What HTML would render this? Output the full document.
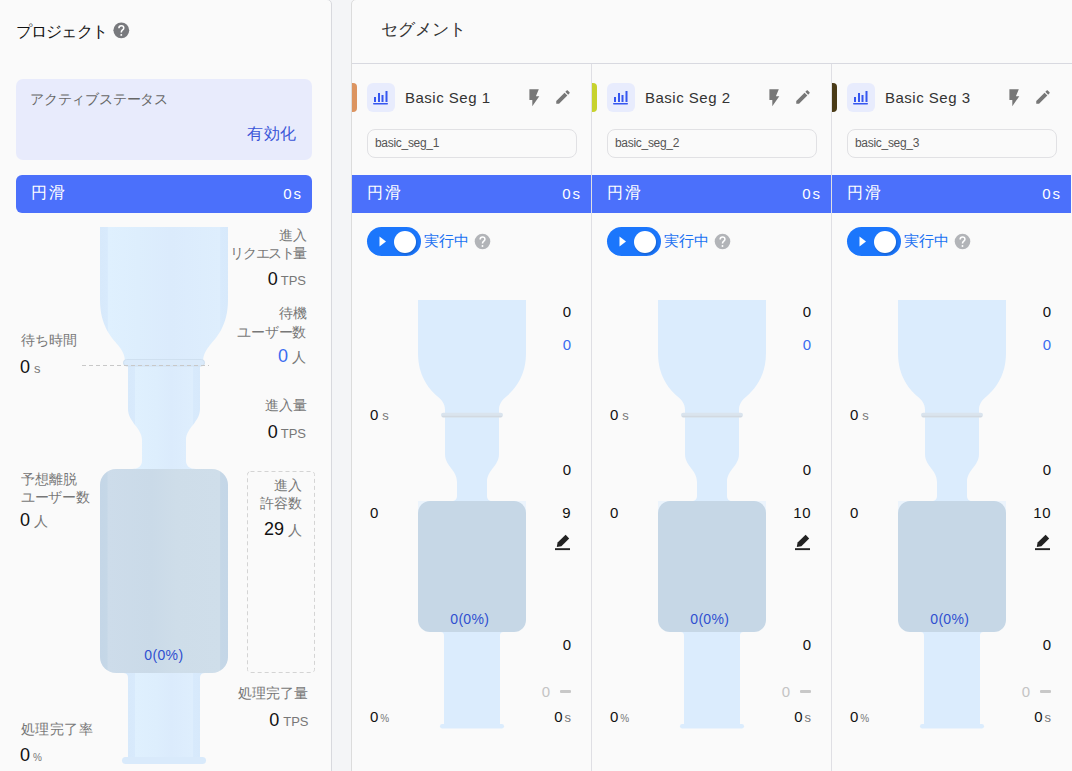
<!DOCTYPE html><html><head><meta charset="utf-8"><style>
*{margin:0;padding:0;box-sizing:border-box}
html,body{width:1072px;height:771px;overflow:hidden;background:#f4f5f7;font-family:"Liberation Sans", sans-serif}
.t{position:absolute;white-space:nowrap;line-height:20px;font-weight:300}
.a{position:absolute;display:block}
.r{position:absolute}
</style></head><body>
<div class="r" style="left:-10px;top:-1px;width:342px;height:800px;background:#fafafa;border:1px solid #d8d9de;border-radius:5px"></div>
<div class="t" style="left:15.5px;top:22px;font-size:16px;color:#111;letter-spacing:-0.75px">プロジェクト</div>
<svg class="a" style="left:112px;top:21px" width="18.8" height="18.8" viewBox="0 0 18.8 18.8"><g transform="translate(1.400,1.450) scale(0.6583)"><circle cx="12" cy="12" r="12" fill="#78797d"/><g transform="translate(12 12.6) scale(1.17) translate(-12 -12.6)"><path d="M8.9,9.4 C8.9,7.4 10.3,6.1 12.1,6.1 C13.9,6.1 15.2,7.3 15.2,9 C15.2,10.4 14.3,11.1 13.3,11.9 C12.4,12.6 12,13.3 12,14.8" fill="none" stroke="#fff" stroke-width="2"/><circle cx="12" cy="18" r="1.25" fill="#fff"/></g></g></svg>
<div class="r" style="left:16px;top:79px;width:296px;height:81px;background:#e8ebfc;border-radius:7px"></div>
<div class="t" style="left:30px;top:89px;font-size:14px;color:#666;letter-spacing:-0.2px">アクティブステータス</div>
<div class="t" style="right:775px;top:124px;font-size:16px;color:#3a55d8;letter-spacing:0.7px">有効化</div>
<div class="r" style="left:16px;top:175px;width:296px;height:38px;background:#4b70fb;border-radius:6px"></div>
<div class="t" style="left:31px;top:183px;font-size:16px;color:#fff;letter-spacing:2px">円滑</div>
<div class="t" style="right:769px;top:184px;font-size:15px;color:#fff;letter-spacing:2px">0s</div>
<svg class="a" style="left:0;top:0" width="340" height="771" viewBox="0 0 340 771">
<defs>
<linearGradient id="lg1" gradientUnits="userSpaceOnUse" x1="100" x2="228" y1="0" y2="0">
<stop offset="0" stop-color="#d7e9fb"/><stop offset="0.058" stop-color="#d8eafc"/><stop offset="0.062" stop-color="#dff0fe"/><stop offset="0.3" stop-color="#ddeefd"/><stop offset="0.55" stop-color="#dbebfc"/><stop offset="0.938" stop-color="#deeefd"/><stop offset="0.942" stop-color="#d8eafc"/><stop offset="1" stop-color="#d7e9fb"/>
</linearGradient>
<linearGradient id="lg3" gradientUnits="userSpaceOnUse" x1="128" x2="200" y1="0" y2="0">
<stop offset="0" stop-color="#d7e9fb"/><stop offset="0.1" stop-color="#d8eafc"/><stop offset="0.104" stop-color="#dff0fe"/><stop offset="0.4" stop-color="#ddeefd"/><stop offset="0.6" stop-color="#dbebfc"/><stop offset="0.896" stop-color="#deeefd"/><stop offset="0.9" stop-color="#d8eafc"/><stop offset="1" stop-color="#d7e9fb"/>
</linearGradient>
<linearGradient id="lg2" gradientUnits="userSpaceOnUse" x1="100" x2="228" y1="0" y2="0">
<stop offset="0" stop-color="#c4d6e7"/><stop offset="0.056" stop-color="#c5d7e7"/><stop offset="0.062" stop-color="#cddcea"/><stop offset="0.4" stop-color="#cadae8"/><stop offset="0.6" stop-color="#cedde9"/><stop offset="0.936" stop-color="#cfdeea"/><stop offset="0.942" stop-color="#c5d7e7"/><stop offset="1" stop-color="#c4d6e7"/>
</linearGradient>
</defs>
<path d="M100,227 H228 V300 C228,326 216,338 210,345 C206,350 203,355 203,362 H125 C125,355 122,350 118,345 C112,338 100,326 100,300 Z" fill="url(#lg1)"/>
<path d="M128,364 H200 V409 C200,422 186,428 186,440 V461 C186,466 190,469 196,469 H132 C138,469 142,466 142,461 V440 C142,428 128,422 128,409 Z" fill="url(#lg3)"/>
<rect x="123.5" y="359.5" width="81" height="6.5" rx="3.2" fill="#daeafa" stroke="#cfe0f0" stroke-width="1"/>
<rect x="100" y="469" width="128" height="204" rx="16" fill="url(#lg2)"/>
<path d="M122,673 C126,673 128,674 128,678 V757 H200 V678 C200,674 202,673 206,673 Z" fill="url(#lg3)"/>
<rect x="122" y="757" width="84" height="7" rx="3.5" fill="#d9eafb"/>
<line x1="82" y1="365.5" x2="209" y2="365.5" stroke="#c8c8c8" stroke-width="1" stroke-dasharray="4 3"/>
<rect x="247.5" y="471.5" width="67" height="201" rx="3" fill="none" stroke="#d4d4d4" stroke-width="1" stroke-dasharray="4 3"/>
</svg>
<div class="t" style="right:765px;top:225px;font-size:14px;color:#777;">進入</div>
<div class="t" style="right:766px;top:243px;font-size:14px;color:#777;letter-spacing:-1.4px">リクエスト量</div>
<div class="t" style="right:766px;top:269px;font-size:18px;color:#111">0<span style="font-size:13px;color:#777;margin-left:3px">TPS</span></div>
<div class="t" style="right:765px;top:303px;font-size:14px;color:#777;">待機</div>
<div class="t" style="right:766px;top:322px;font-size:14px;color:#777;letter-spacing:-0.3px">ユーザー数</div>
<div class="t" style="right:766px;top:346px;font-size:18px;color:#3a6cf0">0<span style="font-size:14px;color:#777;margin-left:4px">人</span></div>
<div class="t" style="right:765.5px;top:395px;font-size:14px;color:#777;">進入量</div>
<div class="t" style="right:766px;top:422px;font-size:18px;color:#111">0<span style="font-size:13px;color:#777;margin-left:3px">TPS</span></div>
<div class="t" style="right:770px;top:475px;font-size:14px;color:#777;">進入</div>
<div class="t" style="right:770px;top:493px;font-size:14px;color:#777;">許容数</div>
<div class="t" style="right:770px;top:519px;font-size:18px;color:#111;letter-spacing:0px">29<span style="font-size:14px;color:#777;margin-left:4px;letter-spacing:0">人</span></div>
<div class="t" style="right:764px;top:683px;font-size:14px;color:#777;">処理完了量</div>
<div class="t" style="right:763.5px;top:710px;font-size:18px;color:#111">0<span style="font-size:13px;color:#777;margin-left:4px">TPS</span></div>
<div class="t" style="left:21px;top:330px;font-size:14px;color:#777;">待ち時間</div>
<div class="t" style="left:20px;top:357px;font-size:18px;color:#111">0<span style="font-size:13px;color:#777;margin-left:4px">s</span></div>
<div class="t" style="left:21px;top:469px;font-size:14px;color:#777;">予想離脱</div>
<div class="t" style="left:21px;top:487px;font-size:14px;color:#777;letter-spacing:-0.3px">ユーザー数</div>
<div class="t" style="left:20px;top:510px;font-size:18px;color:#111">0<span style="font-size:14px;color:#777;margin-left:4px">人</span></div>
<div class="t" style="left:21px;top:719px;font-size:14px;color:#777;letter-spacing:0.4px">処理完了率</div>
<div class="t" style="left:20px;top:745px;font-size:18px;color:#111">0<span style="font-size:10px;color:#777;margin-left:3px">%</span></div>
<div class="t" style="left:144.3px;top:645px;font-size:14px;color:#2e4fd0;letter-spacing:0.35px">0(0%)</div>
<div class="r" style="left:351px;top:-1px;width:800px;height:800px;background:#fafafa;border:1px solid #dcdcdc;border-radius:5px"></div>
<div class="t" style="left:381px;top:20px;font-size:17px;color:#333;">セグメント</div>
<div class="r" style="left:352px;top:63px;width:720px;height:1px;background:#d8d9e0"></div>
<div class="r" style="left:352px;top:83px;width:5px;height:29px;background:#dc9460;border-radius:0 4px 4px 0"></div>
<div class="r" style="left:367px;top:83px;width:28px;height:29px;background:#e8ecfd;border-radius:6px"></div>
<svg class="a" style="left:367px;top:83px" width="28" height="29" viewBox="0 0 28 29"><g fill="#3556f0"><rect x="7" y="14" width="2" height="5"/><rect x="11" y="10" width="2" height="9"/><rect x="14.5" y="12" width="2" height="7"/><rect x="18.5" y="8" width="2" height="11"/><rect x="6" y="20" width="15" height="1.5" rx=".7"/></g></svg>
<div class="t" style="left:405px;top:88px;font-size:15px;color:#333;letter-spacing:0.5px">Basic Seg 1</div>
<svg class="a" style="left:0px;top:0" width="600" height="120" viewBox="0 0 600 120"><path d="M529.4,89.2 H538.8 L535.9,96.2 H539.3 L532.3,106.2 V100 H529.4 Z" fill="#777"/></svg>
<svg class="a" style="left:553.6px;top:88.2px" width="18" height="18" viewBox="0 0 24 24"><path d="M3 17.25V21h3.75L17.81 9.94l-3.75-3.75L3 17.25zM20.71 7.04c.39-.39.39-1.02 0-1.41l-2.34-2.34c-.39-.39-1.02-.39-1.41 0l-1.83 1.83 3.75 3.75 1.83-1.83z" fill="#777"/></svg>
<div class="r" style="left:367px;top:129px;width:210px;height:29px;border:1px solid #e1e1e4;border-radius:8px;background:#fafafa"></div>
<div class="t" style="left:375px;top:133px;font-size:12px;color:#555;letter-spacing:-0.3px">basic_seg_1</div>
<div class="r" style="left:352px;top:175px;width:239px;height:38px;background:#4b70fb"></div>
<div class="t" style="left:367px;top:183px;font-size:16px;color:#fff;letter-spacing:2px">円滑</div>
<div class="t" style="right:490px;top:184px;font-size:15px;color:#fff;letter-spacing:2px">0s</div>
<div class="r" style="left:367px;top:227px;width:54px;height:29px;background:#1b76fc;border-radius:15px"></div>
<svg class="a" style="left:379px;top:236px" width="8" height="11" viewBox="0 0 8 11"><path d="M0.5,0.5 L7,5.5 L0.5,10.5Z" fill="#fff"/></svg>
<div class="r" style="left:394px;top:230.5px;width:22px;height:22px;background:#fff;border-radius:50%;box-shadow:1px 1.5px 2px rgba(0,0,0,.18)"></div>
<div class="t" style="left:424px;top:231px;font-size:15px;color:#1c72f2;">実行中</div>
<svg class="a" style="left:473px;top:232px" width="18.6" height="18.6" viewBox="0 0 18.6 18.6"><g transform="translate(1.700,1.700) scale(0.6500)"><circle cx="12" cy="12" r="12" fill="#b2b4b8"/><g transform="translate(12 12.6) scale(1.17) translate(-12 -12.6)"><path d="M8.9,9.4 C8.9,7.4 10.3,6.1 12.1,6.1 C13.9,6.1 15.2,7.3 15.2,9 C15.2,10.4 14.3,11.1 13.3,11.9 C12.4,12.6 12,13.3 12,14.8" fill="none" stroke="#fff" stroke-width="2"/><circle cx="12" cy="18" r="1.25" fill="#fff"/></g></g></svg>
<svg class="a" style="left:0px;top:0" width="600" height="771" viewBox="0 0 600 771">
<path d="M418,300 H526 V353 C526,375 516,388 507,396 C502,400 499,404 499,410 V415 H445 V410 C445,404 442,400 437,396 C428,388 418,375 418,353 Z" fill="#dbecfd"/>
<path d="M445,415 H499 V454 C499,466 487,470 487,482 V496 C487,499 489,501 492,501 H452 C455,501 457,499 457,496 V482 C457,470 445,466 445,454 Z" fill="#dbecfd"/>
<rect x="441" y="412.8" width="62" height="4.6" rx="2.3" fill="#dae4ee"/><rect x="442" y="415.8" width="60" height="1.4" rx=".7" fill="#d2d9e1"/>
<rect x="418" y="501" width="108" height="14" fill="#ecf4fc"/>
<rect x="418" y="501" width="108" height="131" rx="12" fill="#c6d7e6"/>
<path d="M440,632 C443,632 444,633 444,636 V724 H500 V636 C500,633 501,632 504,632 Z" fill="#dbecfd"/>
<rect x="440" y="724" width="64" height="4.5" rx="2.2" fill="#dbecfd"/>
</svg>
<div class="t" style="left:450.3px;top:609px;font-size:14px;color:#2e4fd0;letter-spacing:0.3px">0(0%)</div>
<div class="t" style="right:501px;top:302px;font-size:15px;color:#111;">0</div>
<div class="t" style="right:501px;top:335px;font-size:15px;color:#3a6cf0;">0</div>
<div class="t" style="right:501px;top:460px;font-size:15px;color:#111;">0</div>
<div class="t" style="right:501px;top:503px;font-size:15px;color:#111;letter-spacing:0.5px">9</div>
<svg class="a" style="left:0px;top:0" width="600" height="560" viewBox="0 0 600 560"><path d="M556.8,547 L557.6,542.4 L565.6,534.8 L569.2,538.4 L561.4,546.2 Z" fill="#222"/><rect x="555" y="548.2" width="15" height="1.9" fill="#222"/></svg>
<div class="t" style="right:501px;top:635px;font-size:15px;color:#111;">0</div>
<div class="t" style="right:522px;top:682px;font-size:15px;color:#c4c4c4;">0</div>
<div class="r" style="left:559.5px;top:690px;width:11.5px;height:2.6px;background:#c8c8c8;border-radius:1px"></div>
<div class="t" style="right:501px;top:707px;font-size:15px;color:#111">0<span style="font-size:13px;color:#777;margin-left:2px">s</span></div>
<div class="t" style="left:370px;top:405px;font-size:15px;color:#111">0<span style="font-size:13px;color:#777;margin-left:4px">s</span></div>
<div class="t" style="left:370px;top:503px;font-size:15px;color:#111;">0</div>
<div class="t" style="left:370px;top:707px;font-size:15px;color:#111">0<span style="font-size:10px;color:#777;margin-left:2px">%</span></div>
<div class="r" style="left:592px;top:83px;width:5px;height:29px;background:#c7d22e;border-radius:0 4px 4px 0"></div>
<div class="r" style="left:607px;top:83px;width:28px;height:29px;background:#e8ecfd;border-radius:6px"></div>
<svg class="a" style="left:607px;top:83px" width="28" height="29" viewBox="0 0 28 29"><g fill="#3556f0"><rect x="7" y="14" width="2" height="5"/><rect x="11" y="10" width="2" height="9"/><rect x="14.5" y="12" width="2" height="7"/><rect x="18.5" y="8" width="2" height="11"/><rect x="6" y="20" width="15" height="1.5" rx=".7"/></g></svg>
<div class="t" style="left:645px;top:88px;font-size:15px;color:#333;letter-spacing:0.5px">Basic Seg 2</div>
<svg class="a" style="left:240px;top:0" width="600" height="120" viewBox="0 0 600 120"><path d="M529.4,89.2 H538.8 L535.9,96.2 H539.3 L532.3,106.2 V100 H529.4 Z" fill="#777"/></svg>
<svg class="a" style="left:793.6px;top:88.2px" width="18" height="18" viewBox="0 0 24 24"><path d="M3 17.25V21h3.75L17.81 9.94l-3.75-3.75L3 17.25zM20.71 7.04c.39-.39.39-1.02 0-1.41l-2.34-2.34c-.39-.39-1.02-.39-1.41 0l-1.83 1.83 3.75 3.75 1.83-1.83z" fill="#777"/></svg>
<div class="r" style="left:607px;top:129px;width:210px;height:29px;border:1px solid #e1e1e4;border-radius:8px;background:#fafafa"></div>
<div class="t" style="left:615px;top:133px;font-size:12px;color:#555;letter-spacing:-0.3px">basic_seg_2</div>
<div class="r" style="left:592px;top:175px;width:239px;height:38px;background:#4b70fb"></div>
<div class="t" style="left:607px;top:183px;font-size:16px;color:#fff;letter-spacing:2px">円滑</div>
<div class="t" style="right:250px;top:184px;font-size:15px;color:#fff;letter-spacing:2px">0s</div>
<div class="r" style="left:607px;top:227px;width:54px;height:29px;background:#1b76fc;border-radius:15px"></div>
<svg class="a" style="left:619px;top:236px" width="8" height="11" viewBox="0 0 8 11"><path d="M0.5,0.5 L7,5.5 L0.5,10.5Z" fill="#fff"/></svg>
<div class="r" style="left:634px;top:230.5px;width:22px;height:22px;background:#fff;border-radius:50%;box-shadow:1px 1.5px 2px rgba(0,0,0,.18)"></div>
<div class="t" style="left:664px;top:231px;font-size:15px;color:#1c72f2;">実行中</div>
<svg class="a" style="left:713px;top:232px" width="18.6" height="18.6" viewBox="0 0 18.6 18.6"><g transform="translate(1.700,1.700) scale(0.6500)"><circle cx="12" cy="12" r="12" fill="#b2b4b8"/><g transform="translate(12 12.6) scale(1.17) translate(-12 -12.6)"><path d="M8.9,9.4 C8.9,7.4 10.3,6.1 12.1,6.1 C13.9,6.1 15.2,7.3 15.2,9 C15.2,10.4 14.3,11.1 13.3,11.9 C12.4,12.6 12,13.3 12,14.8" fill="none" stroke="#fff" stroke-width="2"/><circle cx="12" cy="18" r="1.25" fill="#fff"/></g></g></svg>
<svg class="a" style="left:240px;top:0" width="600" height="771" viewBox="0 0 600 771">
<path d="M418,300 H526 V353 C526,375 516,388 507,396 C502,400 499,404 499,410 V415 H445 V410 C445,404 442,400 437,396 C428,388 418,375 418,353 Z" fill="#dbecfd"/>
<path d="M445,415 H499 V454 C499,466 487,470 487,482 V496 C487,499 489,501 492,501 H452 C455,501 457,499 457,496 V482 C457,470 445,466 445,454 Z" fill="#dbecfd"/>
<rect x="441" y="412.8" width="62" height="4.6" rx="2.3" fill="#dae4ee"/><rect x="442" y="415.8" width="60" height="1.4" rx=".7" fill="#d2d9e1"/>
<rect x="418" y="501" width="108" height="14" fill="#ecf4fc"/>
<rect x="418" y="501" width="108" height="131" rx="12" fill="#c6d7e6"/>
<path d="M440,632 C443,632 444,633 444,636 V724 H500 V636 C500,633 501,632 504,632 Z" fill="#dbecfd"/>
<rect x="440" y="724" width="64" height="4.5" rx="2.2" fill="#dbecfd"/>
</svg>
<div class="t" style="left:690.3px;top:609px;font-size:14px;color:#2e4fd0;letter-spacing:0.3px">0(0%)</div>
<div class="t" style="right:261px;top:302px;font-size:15px;color:#111;">0</div>
<div class="t" style="right:261px;top:335px;font-size:15px;color:#3a6cf0;">0</div>
<div class="t" style="right:261px;top:460px;font-size:15px;color:#111;">0</div>
<div class="t" style="right:261px;top:503px;font-size:15px;color:#111;letter-spacing:0.5px">10</div>
<svg class="a" style="left:240px;top:0" width="600" height="560" viewBox="0 0 600 560"><path d="M556.8,547 L557.6,542.4 L565.6,534.8 L569.2,538.4 L561.4,546.2 Z" fill="#222"/><rect x="555" y="548.2" width="15" height="1.9" fill="#222"/></svg>
<div class="t" style="right:261px;top:635px;font-size:15px;color:#111;">0</div>
<div class="t" style="right:282px;top:682px;font-size:15px;color:#c4c4c4;">0</div>
<div class="r" style="left:799.5px;top:690px;width:11.5px;height:2.6px;background:#c8c8c8;border-radius:1px"></div>
<div class="t" style="right:261px;top:707px;font-size:15px;color:#111">0<span style="font-size:13px;color:#777;margin-left:2px">s</span></div>
<div class="t" style="left:610px;top:405px;font-size:15px;color:#111">0<span style="font-size:13px;color:#777;margin-left:4px">s</span></div>
<div class="t" style="left:610px;top:503px;font-size:15px;color:#111;">0</div>
<div class="t" style="left:610px;top:707px;font-size:15px;color:#111">0<span style="font-size:10px;color:#777;margin-left:2px">%</span></div>
<div class="r" style="left:832px;top:83px;width:5px;height:29px;background:#4a3b17;border-radius:0 4px 4px 0"></div>
<div class="r" style="left:847px;top:83px;width:28px;height:29px;background:#e8ecfd;border-radius:6px"></div>
<svg class="a" style="left:847px;top:83px" width="28" height="29" viewBox="0 0 28 29"><g fill="#3556f0"><rect x="7" y="14" width="2" height="5"/><rect x="11" y="10" width="2" height="9"/><rect x="14.5" y="12" width="2" height="7"/><rect x="18.5" y="8" width="2" height="11"/><rect x="6" y="20" width="15" height="1.5" rx=".7"/></g></svg>
<div class="t" style="left:885px;top:88px;font-size:15px;color:#333;letter-spacing:0.5px">Basic Seg 3</div>
<svg class="a" style="left:480px;top:0" width="600" height="120" viewBox="0 0 600 120"><path d="M529.4,89.2 H538.8 L535.9,96.2 H539.3 L532.3,106.2 V100 H529.4 Z" fill="#777"/></svg>
<svg class="a" style="left:1033.6px;top:88.2px" width="18" height="18" viewBox="0 0 24 24"><path d="M3 17.25V21h3.75L17.81 9.94l-3.75-3.75L3 17.25zM20.71 7.04c.39-.39.39-1.02 0-1.41l-2.34-2.34c-.39-.39-1.02-.39-1.41 0l-1.83 1.83 3.75 3.75 1.83-1.83z" fill="#777"/></svg>
<div class="r" style="left:847px;top:129px;width:210px;height:29px;border:1px solid #e1e1e4;border-radius:8px;background:#fafafa"></div>
<div class="t" style="left:855px;top:133px;font-size:12px;color:#555;letter-spacing:-0.3px">basic_seg_3</div>
<div class="r" style="left:832px;top:175px;width:239px;height:38px;background:#4b70fb"></div>
<div class="t" style="left:847px;top:183px;font-size:16px;color:#fff;letter-spacing:2px">円滑</div>
<div class="t" style="right:10px;top:184px;font-size:15px;color:#fff;letter-spacing:2px">0s</div>
<div class="r" style="left:847px;top:227px;width:54px;height:29px;background:#1b76fc;border-radius:15px"></div>
<svg class="a" style="left:859px;top:236px" width="8" height="11" viewBox="0 0 8 11"><path d="M0.5,0.5 L7,5.5 L0.5,10.5Z" fill="#fff"/></svg>
<div class="r" style="left:874px;top:230.5px;width:22px;height:22px;background:#fff;border-radius:50%;box-shadow:1px 1.5px 2px rgba(0,0,0,.18)"></div>
<div class="t" style="left:904px;top:231px;font-size:15px;color:#1c72f2;">実行中</div>
<svg class="a" style="left:953px;top:232px" width="18.6" height="18.6" viewBox="0 0 18.6 18.6"><g transform="translate(1.700,1.700) scale(0.6500)"><circle cx="12" cy="12" r="12" fill="#b2b4b8"/><g transform="translate(12 12.6) scale(1.17) translate(-12 -12.6)"><path d="M8.9,9.4 C8.9,7.4 10.3,6.1 12.1,6.1 C13.9,6.1 15.2,7.3 15.2,9 C15.2,10.4 14.3,11.1 13.3,11.9 C12.4,12.6 12,13.3 12,14.8" fill="none" stroke="#fff" stroke-width="2"/><circle cx="12" cy="18" r="1.25" fill="#fff"/></g></g></svg>
<svg class="a" style="left:480px;top:0" width="600" height="771" viewBox="0 0 600 771">
<path d="M418,300 H526 V353 C526,375 516,388 507,396 C502,400 499,404 499,410 V415 H445 V410 C445,404 442,400 437,396 C428,388 418,375 418,353 Z" fill="#dbecfd"/>
<path d="M445,415 H499 V454 C499,466 487,470 487,482 V496 C487,499 489,501 492,501 H452 C455,501 457,499 457,496 V482 C457,470 445,466 445,454 Z" fill="#dbecfd"/>
<rect x="441" y="412.8" width="62" height="4.6" rx="2.3" fill="#dae4ee"/><rect x="442" y="415.8" width="60" height="1.4" rx=".7" fill="#d2d9e1"/>
<rect x="418" y="501" width="108" height="14" fill="#ecf4fc"/>
<rect x="418" y="501" width="108" height="131" rx="12" fill="#c6d7e6"/>
<path d="M440,632 C443,632 444,633 444,636 V724 H500 V636 C500,633 501,632 504,632 Z" fill="#dbecfd"/>
<rect x="440" y="724" width="64" height="4.5" rx="2.2" fill="#dbecfd"/>
</svg>
<div class="t" style="left:930.3px;top:609px;font-size:14px;color:#2e4fd0;letter-spacing:0.3px">0(0%)</div>
<div class="t" style="right:21px;top:302px;font-size:15px;color:#111;">0</div>
<div class="t" style="right:21px;top:335px;font-size:15px;color:#3a6cf0;">0</div>
<div class="t" style="right:21px;top:460px;font-size:15px;color:#111;">0</div>
<div class="t" style="right:21px;top:503px;font-size:15px;color:#111;letter-spacing:0.5px">10</div>
<svg class="a" style="left:480px;top:0" width="600" height="560" viewBox="0 0 600 560"><path d="M556.8,547 L557.6,542.4 L565.6,534.8 L569.2,538.4 L561.4,546.2 Z" fill="#222"/><rect x="555" y="548.2" width="15" height="1.9" fill="#222"/></svg>
<div class="t" style="right:21px;top:635px;font-size:15px;color:#111;">0</div>
<div class="t" style="right:42px;top:682px;font-size:15px;color:#c4c4c4;">0</div>
<div class="r" style="left:1039.5px;top:690px;width:11.5px;height:2.6px;background:#c8c8c8;border-radius:1px"></div>
<div class="t" style="right:21px;top:707px;font-size:15px;color:#111">0<span style="font-size:13px;color:#777;margin-left:2px">s</span></div>
<div class="t" style="left:850px;top:405px;font-size:15px;color:#111">0<span style="font-size:13px;color:#777;margin-left:4px">s</span></div>
<div class="t" style="left:850px;top:503px;font-size:15px;color:#111;">0</div>
<div class="t" style="left:850px;top:707px;font-size:15px;color:#111">0<span style="font-size:10px;color:#777;margin-left:2px">%</span></div>
<div class="r" style="left:591px;top:64px;width:1px;height:707px;background:#dfdfe4"></div>
<div class="r" style="left:831px;top:64px;width:1px;height:707px;background:#dfdfe4"></div>
</body></html>
